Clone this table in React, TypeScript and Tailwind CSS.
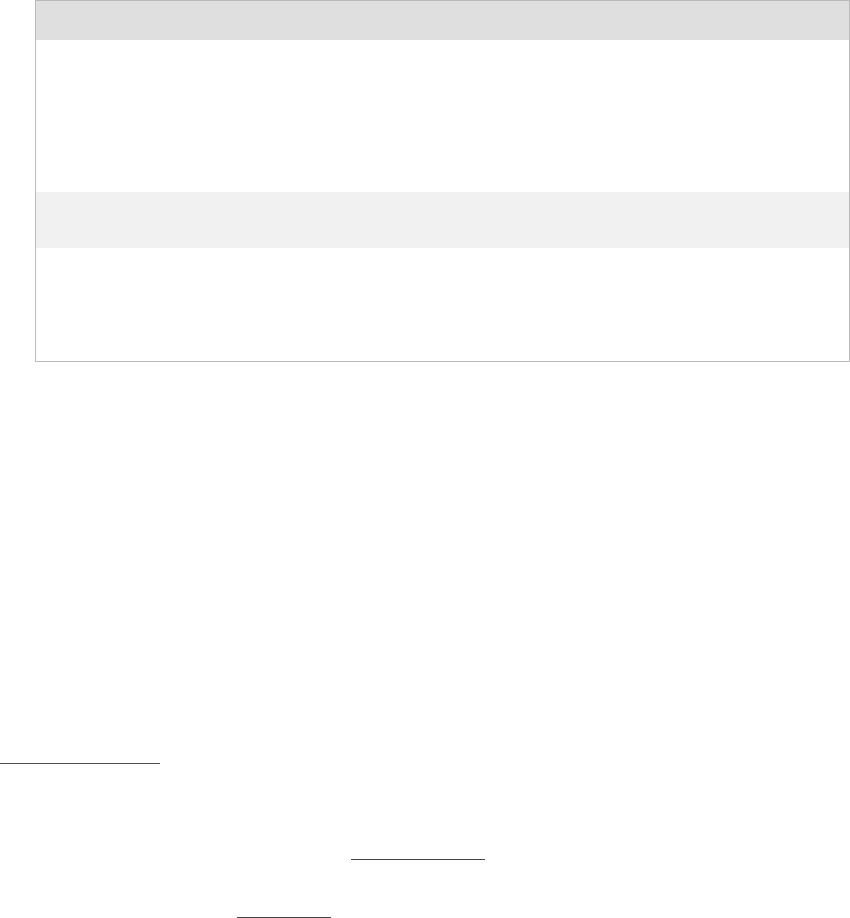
import React from 'react';

const rows = [
    { height: 'h-[152px]', bg: 'bg-white' },
    { height: 'h-[56px]', bg: 'bg-[#f1f1f1]' },
    { height: 'h-[113px]', bg: 'bg-white' },
];

const App: React.FC = () => {
    return (
        <div className="w-[850px] min-h-[918px] bg-white font-['Liberation_Sans',Arial,sans-serif]">
            {/* Table */}
            <div className="ml-[35px] w-[815px] border border-[#bbbbbb]">
                <div className="h-[39px] bg-[#dfdfdf]"></div>
                {rows.map((r, i) => (
                    <div key={i} className={`${r.height} ${r.bg}`}></div>
                ))}
            </div>

            {/* Link underlines */}
            <div className="mt-[401px] w-[160px] h-px bg-[#2b5797]"></div>
            <div className="mt-[95px] ml-[351px] w-[134px] h-px bg-[#444444]"></div>
            <div className="mt-[57px] ml-[237px] w-[94px] h-px bg-[#444444]"></div>
        </div>
    );
};

export default App;
